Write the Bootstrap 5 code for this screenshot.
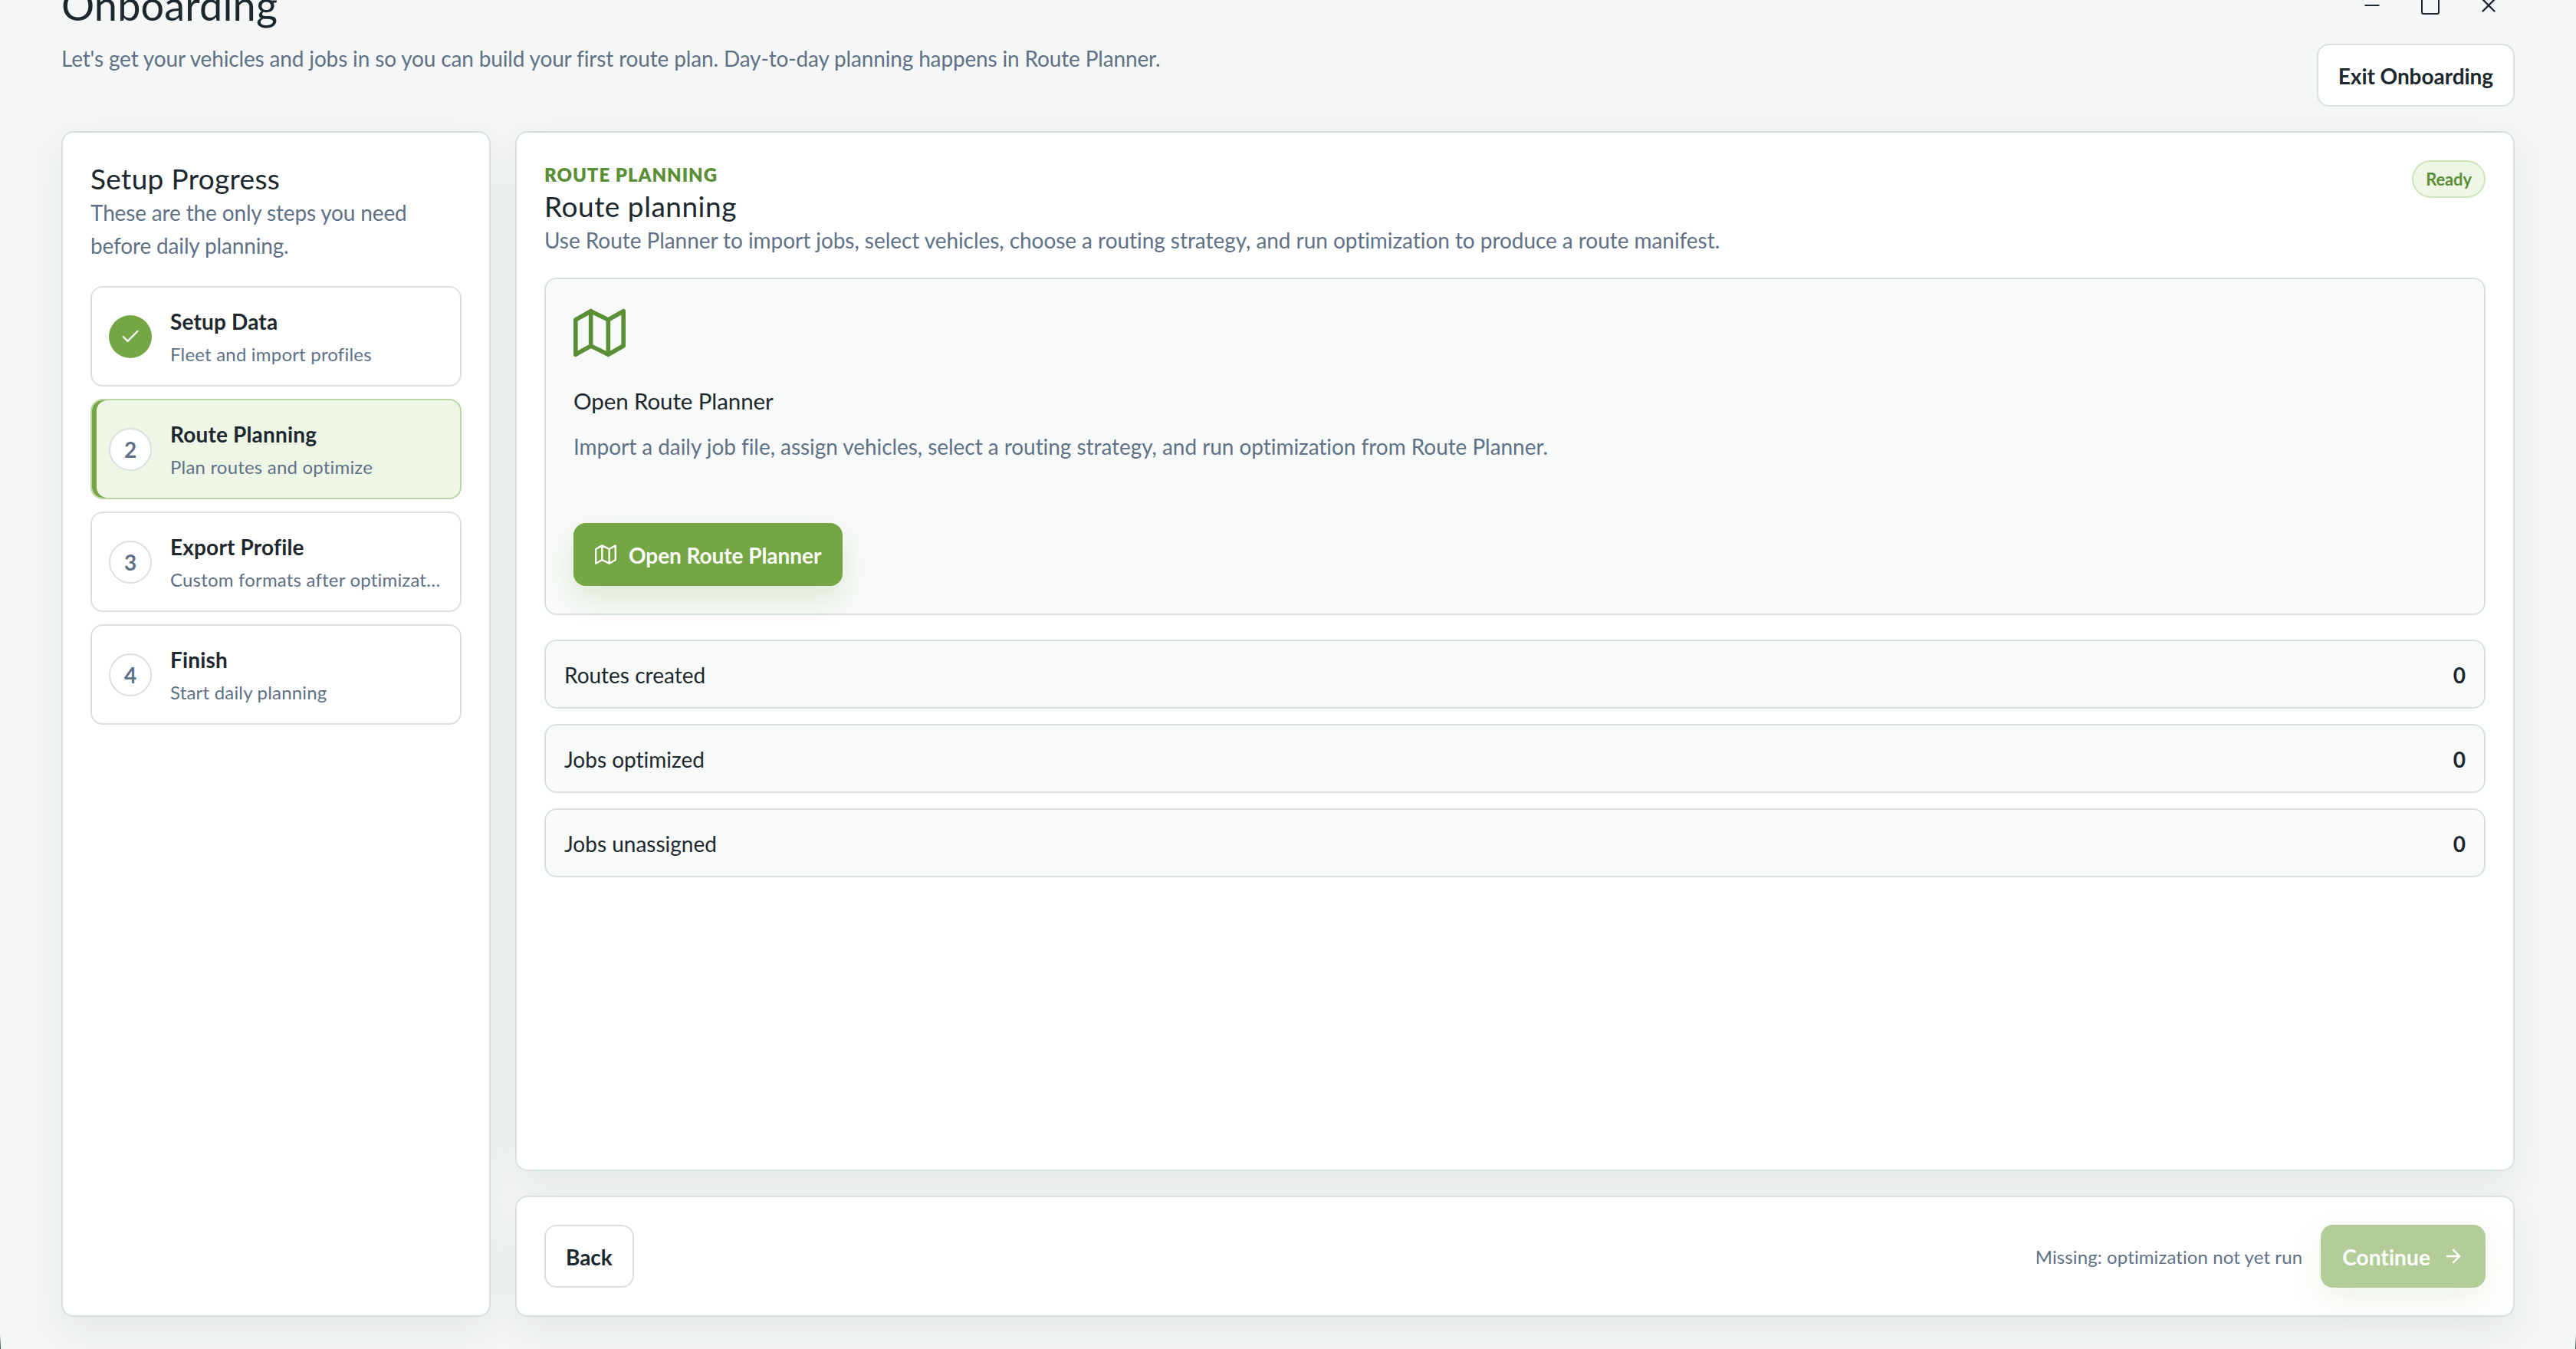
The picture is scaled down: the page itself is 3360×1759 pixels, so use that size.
<!DOCTYPE html>
<html lang="en">
<head>
  <meta charset="UTF-8" />
  <meta name="viewport" content="width=device-width, initial-scale=1.0" />
  <title>Onboarding</title>
  <link href="https://cdn.jsdelivr.net/npm/bootstrap@5.3.3/dist/css/bootstrap.min.css" rel="stylesheet">
  <style>
    :root {
      --ink: #1c282e;
      --muted: #5f7186;
      --line: #d9e1df;
      --green: #74a644;
      --green-dark: #5b8f35;
      --green-soft: #eef6e6;
    }
    body {
      height: 1759px;
      padding: 0 80px;
      overflow: hidden;
      font-family: Lato, 'Noto Sans', sans-serif;
      font-size: 28px;
      line-height: 43px;
      font-variant-ligatures: none;
      color: var(--ink);
      background: #f4f7f6;
    }
    svg {
      fill: none;
      stroke: currentColor;
      stroke-width: 2;
      stroke-linecap: round;
      stroke-linejoin: round;
      flex: none;
    }

    /* header */
    .page-head {
      margin-top: -27px;
      height: 166px;
    }
    .page-title {
      margin: 4px 0 18px;
      font-size: 54px;
      line-height: 60px;
      font-weight: 400;
      letter-spacing: .003em;
    }
    .soft-text {
      color: var(--muted);
      letter-spacing: -.0055em;
    }
    .soft-text-wide {
      letter-spacing: -.002em;
    }
    .win-btn {
      width: 68px;
      height: 68px;
    }

    .panel {
      padding: 36px;
      background: #fff;
      border: 2px solid var(--line);
      border-radius: 16px;
      box-shadow: 0 20px 48px rgba(28, 40, 46, .07);
    }
    .workspace {
      height: 1546px;
      gap: 32px;
      margin-top: 32px;
    }
    .sidebar-panel {
      width: 560px;
      flex: none;
    }
    .section-title {
      margin: 0;
      font-size: 37px;
      line-height: 47px;
      font-weight: 400;
      letter-spacing: .009em;
    }
    .content-head .section-title {
      line-height: 44px;
      letter-spacing: .014em;
    }
    .content-head .soft-text {
      line-height: 45px;
    }

    /* setup steps */
    .step-list {
      gap: 16px;
      margin-top: 31px;
    }
    .step {
      height: 131px;
      padding: 1px 22px 0;
      gap: 24px;
      border: 2px solid var(--line);
      border-radius: 16px;
      background: #fff;
    }
    .step.current {
      border-color: #bbd6a3;
      background: var(--green-soft);
      box-shadow: inset 6px 0 0 var(--green);
    }
    .step-dot {
      width: 56px;
      height: 56px;
      flex: none;
      padding-top: 2px;
      margin-top: -1px;
      border: 2px solid var(--line);
      border-radius: 50%;
      background: #fff;
      color: var(--muted);
      font-weight: 700;
    }
    .step-dot.done {
      padding: 0;
      border: 0;
      background: var(--green);
      color: #fff;
    }
    .step-name {
      line-height: 42px;
      font-weight: 700;
      letter-spacing: .006em;
    }
    .step-note {
      margin-top: 3px;
      font-size: 24px;
      line-height: 37px;
      color: var(--muted);
      letter-spacing: .008em;
    }

    /* content */
    .eyebrow {
      font-size: 24px;
      line-height: 38px;
      font-weight: 800;
      letter-spacing: .04em;
      color: var(--green-dark);
    }
    .ready-pill {
      height: 49px;
      padding: 0 16px;
      border: 2px solid #cde5b7;
      border-radius: 25px;
      background: var(--green-soft);
      color: var(--green-dark);
      font-size: 22px;
      font-weight: 700;
      letter-spacing: -.005em;
    }
    .planner-card {
      margin-top: 26px;
      height: 440px;
      padding: 36px;
      border: 2px solid var(--line);
      border-radius: 16px;
      background: #f8faf9;
    }
    .planner-title {
      margin: 34px 0 17px;
      font-size: 29.5px;
      line-height: 42px;
      font-weight: 400;
      letter-spacing: -.003em;
    }
    .stat-list {
      gap: 20px;
      margin-top: 32px;
    }
    .stat-row {
      height: 90px;
      padding: 2px 24px 0;
      border: 2px solid var(--line);
      border-radius: 16px;
      background: #f8faf9;
    }
    .app-btn {
      display: inline-flex;
      align-items: center;
      gap: 16px;
      height: 82px;
      padding: 2px 26px 0;
      border: 2px solid var(--line);
      border-radius: 16px;
      background: #fff;
      color: var(--ink);
      font-size: 28px;
      font-weight: 700;
      letter-spacing: -.002em;
    }
    .app-btn svg {
      margin-top: -2px;
    }
    .app-btn-green {
      padding: 2px 28px 0;
      border: 0;
      background: var(--green);
      color: #fff;
      box-shadow: 0 16px 36px rgba(116, 166, 68, .2);
    }
    .app-btn-green:disabled {
      background: var(--green);
      color: #fff;
      letter-spacing: .004em;
      opacity: .55;
    }
    .missing-note {
      font-size: 24px;
      color: var(--muted);
      letter-spacing: .004em;
    }

    /* edge of the rounded window */
    .win-edge {
      position: absolute;
      bottom: 0;
      width: 1px;
      height: 18px;
      background: linear-gradient(transparent, #2b474b);
    }
  </style>
</head>
<body class="position-relative">

  <header class="page-head d-flex justify-content-between">
    <div>
      <h1 class="page-title">Onboarding</h1>
      <div class="soft-text">Let's get your vehicles and jobs in so you can build your first route plan. Day-to-day planning happens in Route Planner.</div>
    </div>
    <div class="d-flex flex-column align-items-end gap-3">
      <div class="d-flex gap-2">
        <div class="win-btn d-flex align-items-center justify-content-center">
          <svg width="28" height="28" viewBox="0 0 28 28"><path d="M4.5 14h19" stroke-linecap="butt"/></svg>
        </div>
        <div class="win-btn d-flex align-items-center justify-content-center">
          <svg width="28" height="28" viewBox="0 0 28 28"><rect x="3" y="3" width="22" height="22" rx="2"/></svg>
        </div>
        <div class="win-btn d-flex align-items-center justify-content-center">
          <svg width="28" height="28" viewBox="0 0 28 28"><path d="M6.5 6.5l15 15M21.5 6.5l-15 15" stroke-width="2.4"/></svg>
        </div>
      </div>
      <button class="app-btn">Exit Onboarding</button>
    </div>
  </header>

  <div class="workspace d-flex">

    <aside class="panel sidebar-panel">
      <h2 class="section-title">Setup Progress</h2>
      <div class="soft-text">These are the only steps you need before daily planning.</div>

      <div class="step-list d-flex flex-column">
        <div class="step d-flex align-items-center">
          <div class="step-dot done d-flex align-items-center justify-content-center">
            <svg width="28" height="28" viewBox="0 0 24 24"><path d="M20 6 9 17l-5-5"/></svg>
          </div>
          <div class="overflow-hidden">
            <div class="step-name">Setup Data</div>
            <div class="step-note text-truncate">Fleet and import profiles</div>
          </div>
        </div>
        <div class="step current d-flex align-items-center">
          <div class="step-dot d-flex align-items-center justify-content-center">2</div>
          <div class="overflow-hidden">
            <div class="step-name">Route Planning</div>
            <div class="step-note text-truncate">Plan routes and optimize</div>
          </div>
        </div>
        <div class="step d-flex align-items-center">
          <div class="step-dot d-flex align-items-center justify-content-center">3</div>
          <div class="overflow-hidden">
            <div class="step-name">Export Profile</div>
            <div class="step-note text-truncate">Custom formats after optimization</div>
          </div>
        </div>
        <div class="step d-flex align-items-center">
          <div class="step-dot d-flex align-items-center justify-content-center">4</div>
          <div class="overflow-hidden">
            <div class="step-name">Finish</div>
            <div class="step-note text-truncate">Start daily planning</div>
          </div>
        </div>
      </div>
    </aside>

    <div class="d-flex flex-column flex-grow-1" style="gap: 32px">
      <main class="panel flex-grow-1">
        <div class="content-head d-flex justify-content-between align-items-start">
          <div>
            <div class="eyebrow">ROUTE PLANNING</div>
            <h2 class="section-title">Route planning</h2>
            <div class="soft-text soft-text-wide">Use Route Planner to import jobs, select vehicles, choose a routing strategy, and run optimization to produce a route manifest.</div>
          </div>
          <span class="ready-pill d-flex align-items-center">Ready</span>
        </div>

        <section class="planner-card d-flex flex-column align-items-start">
          <svg width="68" height="68" viewBox="0 0 24 24" color="#5b8f35"><path d="M1 6v16l7-4 8 4 7-4V2l-7 4-8-4-7 4zM8 2v16M16 6v16"/></svg>
          <h3 class="planner-title">Open Route Planner</h3>
          <div class="soft-text soft-text-wide">Import a daily job file, assign vehicles, select a routing strategy, and run optimization from Route Planner.</div>
          <button class="app-btn app-btn-green mt-auto">
            <svg width="28" height="28" viewBox="0 0 24 24"><path d="M1 6v16l7-4 8 4 7-4V2l-7 4-8-4-7 4zM8 2v16M16 6v16"/></svg>
            Open Route Planner
          </button>
        </section>

        <div class="stat-list d-flex flex-column">
          <div class="stat-row d-flex justify-content-between align-items-center"><span>Routes created</span><b>0</b></div>
          <div class="stat-row d-flex justify-content-between align-items-center"><span>Jobs optimized</span><b>0</b></div>
          <div class="stat-row d-flex justify-content-between align-items-center"><span>Jobs unassigned</span><b>0</b></div>
        </div>
      </main>

      <footer class="panel d-flex justify-content-between align-items-center">
        <button class="app-btn">Back</button>
        <div class="d-flex align-items-center gap-4">
          <span class="missing-note">Missing: optimization not yet run</span>
          <button class="app-btn app-btn-green" disabled>
            Continue
            <svg width="28" height="28" viewBox="0 0 24 24"><path d="M5 12h14M12 5l7 7-7 7"/></svg>
          </button>
        </div>
      </footer>
    </div>

  </div>

  <div class="win-edge start-0"></div>
  <div class="win-edge end-0"></div>

<script src="https://cdn.jsdelivr.net/npm/bootstrap@5.3.3/dist/js/bootstrap.bundle.min.js"></script>
</body>
</html>
